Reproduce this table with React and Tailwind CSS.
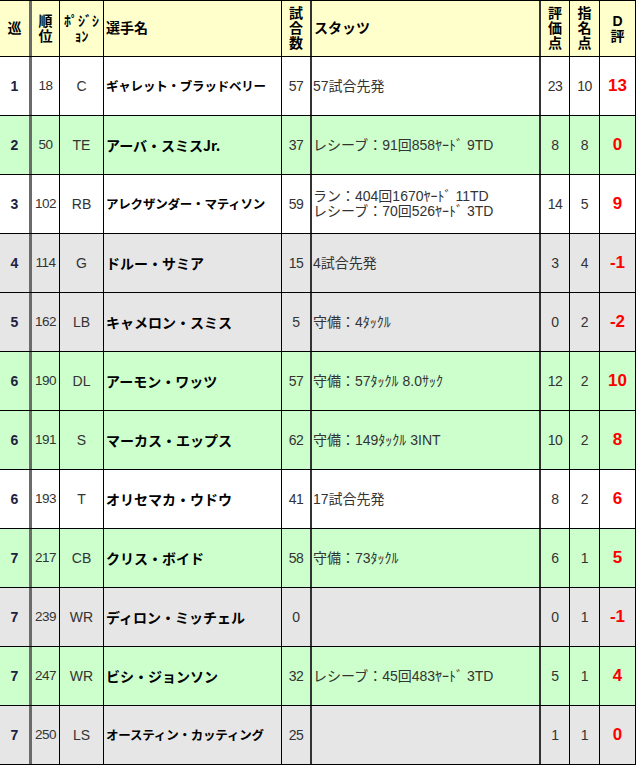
import React from "react";

const cols = [
  "w-[32px] border-r-[3px] border-r-[#6b6b6b]",
  "w-[28px] border-r border-r-black",
  "w-[44px] border-r border-r-black",
  "w-[178px] border-r border-r-black",
  "w-[30px] border-r-2 border-r-[#333]",
  "w-[229px] border-r-2 border-r-[#333]",
  "w-[29px] border-r border-r-black",
  "w-[30px] border-r border-r-black",
  "w-[36px] border-r border-r-black",
];

const bg = {
  white: "bg-white",
  green: "bg-[#ccffcc]",
  gray: "bg-[#e6e6e6]",
};

const rows = [
  [1, 18, "C", "ギャレット・ブラッドベリー", 57, ["57試合先発"], 23, 10, 13, "white", true],
  [2, 50, "TE", "アーバ・スミスJr.", 37, ["レシーブ：91回858ﾔｰﾄﾞ 9TD"], 8, 8, 0, "green"],
  [3, 102, "RB", "アレクザンダー・マティソン", 59, ["ラン：404回1670ﾔｰﾄﾞ 11TD", "レシーブ：70回526ﾔｰﾄﾞ 3TD"], 14, 5, 9, "white", true],
  [4, 114, "G", "ドルー・サミア", 15, ["4試合先発"], 3, 4, -1, "gray"],
  [5, 162, "LB", "キャメロン・スミス", 5, ["守備：4ﾀｯｸﾙ"], 0, 2, -2, "gray"],
  [6, 190, "DL", "アーモン・ワッツ", 57, ["守備：57ﾀｯｸﾙ 8.0ｻｯｸ"], 12, 2, 10, "green"],
  [6, 191, "S", "マーカス・エップス", 62, ["守備：149ﾀｯｸﾙ 3INT"], 10, 2, 8, "green"],
  [6, 193, "T", "オリセマカ・ウドウ", 41, ["17試合先発"], 8, 2, 6, "white"],
  [7, 217, "CB", "クリス・ボイド", 58, ["守備：73ﾀｯｸﾙ"], 6, 1, 5, "green"],
  [7, 239, "WR", "ディロン・ミッチェル", 0, [], 0, 1, -1, "gray"],
  [7, 247, "WR", "ビシ・ジョンソン", 32, ["レシーブ：45回483ﾔｰﾄﾞ 3TD"], 5, 1, 4, "green"],
  [7, 250, "LS", "オースティン・カッティング", 25, [], 1, 1, 0, "gray", true],
];

const Cell = ({ i, className = "", children }) => (
  <div className={`${cols[i]} shrink-0 h-full flex items-center ${className}`}>
    {children}
  </div>
);

export default function App() {
  return (
    <div className="min-h-screen bg-white font-['Liberation_Sans','Noto_Sans_CJK_JP',sans-serif]">
      <div className="w-[636px]">
        {/* Header */}
        <div className="flex h-[57px] bg-[#ffffcc] border-t border-b border-black text-[14px] font-bold text-black leading-[15px]">
          <Cell i={0} className="justify-center">巡</Cell>
          <Cell i={1} className="justify-center text-center">
            順<br />位
          </Cell>
          <Cell i={2} className="justify-center text-center">
            <span className="px-[2px] break-all">ﾎﾟｼﾞｼｮﾝ</span>
          </Cell>
          <Cell i={3} className="pl-[2px]">選手名</Cell>
          <Cell i={4} className="justify-center text-center">
            試<br />合<br />数
          </Cell>
          <Cell i={5} className="pl-[2px]">スタッツ</Cell>
          <Cell i={6} className="justify-center text-center">
            評<br />価<br />点
          </Cell>
          <Cell i={7} className="justify-center text-center">
            指<br />名<br />点
          </Cell>
          <Cell i={8} className="justify-center text-center">
            D<br />評
          </Cell>
        </div>

        {/* Rows */}
        {rows.map((r, idx) => (
          <div key={idx} className={`flex h-[59px] border-b border-black ${bg[r[9]]}`}>
            <Cell i={0} className="justify-center text-[14px] font-bold text-[#1e2040]">{r[0]}</Cell>
            <Cell i={1} className="justify-center text-[13.5px] tracking-[-0.5px] text-[#333]">{r[1]}</Cell>
            <Cell i={2} className="justify-center text-[14px] text-[#333]">{r[2]}</Cell>
            <Cell
              i={3}
              className={`pl-[2px] font-bold text-black whitespace-nowrap font-['Noto_Sans_CJK_JP',sans-serif] ${r[10] ? "text-[12.5px] tracking-[-0.2px]" : "text-[14px]"}`}
            >
              {r[3]}
            </Cell>
            <Cell i={4} className="justify-center text-[14px] tracking-[-0.5px] text-[#333]">{r[4]}</Cell>
            <Cell i={5} className="pl-[1px] text-[14px] text-[#333] leading-[15px]">
              <div className="flex flex-col">
                {r[5].map((s, k) => (
                  <span key={k} className="whitespace-nowrap">{s}</span>
                ))}
              </div>
            </Cell>
            <Cell i={6} className="justify-center text-[14px] tracking-[-0.5px] text-[#333]">{r[6]}</Cell>
            <Cell i={7} className="justify-center text-[14px] tracking-[-0.5px] text-[#333]">{r[7]}</Cell>
            <Cell i={8} className="justify-center text-[17px] font-bold text-[#ff0000]">{r[8]}</Cell>
          </div>
        ))}
      </div>
    </div>
  );
}
